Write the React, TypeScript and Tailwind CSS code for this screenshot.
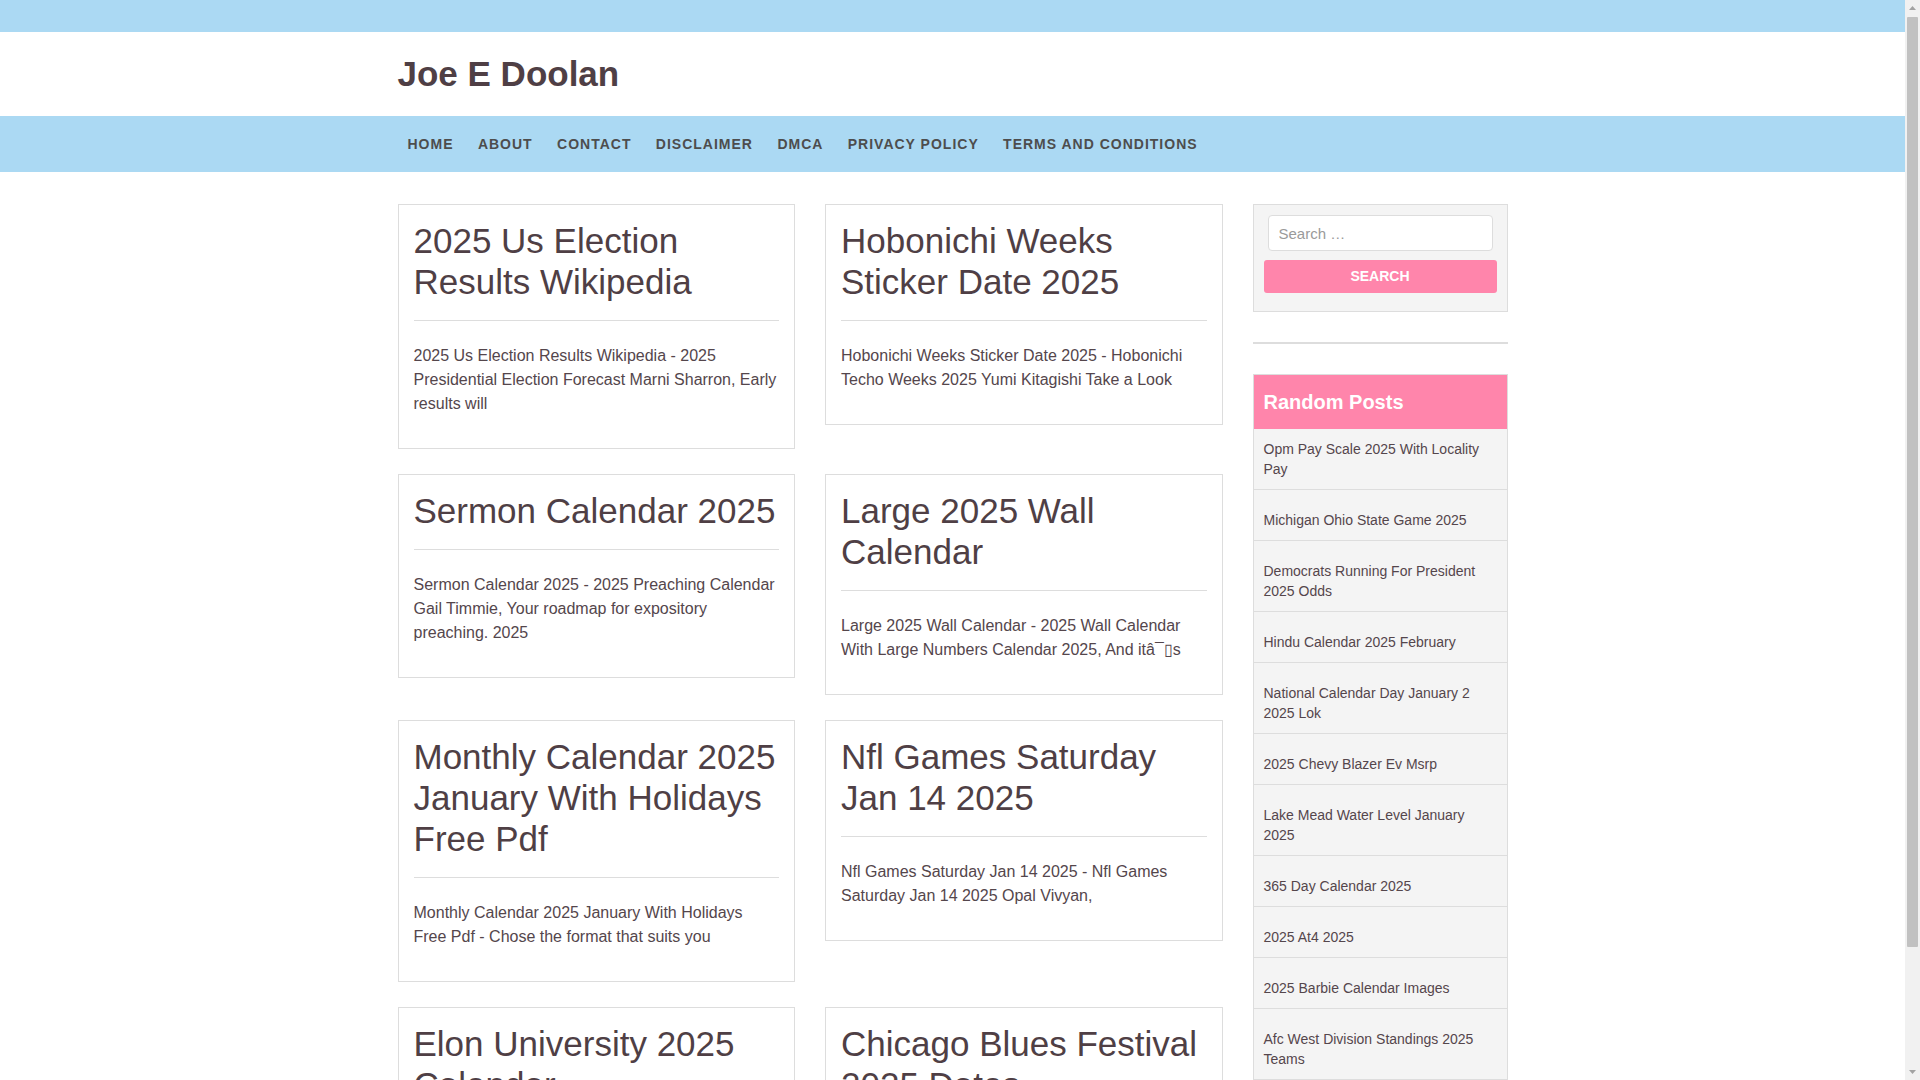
const navLinks = ['Home', 'About', 'Contact', 'Disclaimer', 'DMCA', 'Privacy Policy', 'Terms and Conditions'];

const posts = [
  {
    title: '2025 Us Election Results Wikipedia',
    excerpt: '2025 Us Election Results Wikipedia - 2025 Presidential Election Forecast Marni Sharron, Early results will',
  },
  {
    title: 'Hobonichi Weeks Sticker Date 2025',
    excerpt: 'Hobonichi Weeks Sticker Date 2025 - Hobonichi Techo Weeks 2025 Yumi Kitagishi Take a Look',
  },
  {
    title: 'Sermon Calendar 2025',
    excerpt: 'Sermon Calendar 2025 - 2025 Preaching Calendar Gail Timmie, Your roadmap for expository preaching. 2025',
  },
  {
    title: 'Large 2025 Wall Calendar',
    excerpt: 'Large 2025 Wall Calendar - 2025 Wall Calendar With Large Numbers Calendar 2025, And itâ¯▯s',
  },
  {
    title: 'Monthly Calendar 2025 January With Holidays Free Pdf',
    excerpt: 'Monthly Calendar 2025 January With Holidays Free Pdf - Chose the format that suits you',
  },
  {
    title: 'Nfl Games Saturday Jan 14 2025',
    excerpt: 'Nfl Games Saturday Jan 14 2025 - Nfl Games Saturday Jan 14 2025 Opal Vivyan,',
  },
  {
    title: 'Elon University 2025 Calendar',
    excerpt: 'Elon University 2025 Calendar - Elon University Academic Calendar 2025 Spring and Fall Semester',
  },
  {
    title: 'Chicago Blues Festival 2025 Dates',
    excerpt: 'Chicago Blues Festival 2025 Dates - Chicago Blues Festival 2025 Lineup, Tickets and Schedule',
  },
];

const randomPosts = [
  'Opm Pay Scale 2025 With Locality Pay',
  'Michigan Ohio State Game 2025',
  'Democrats Running For President 2025 Odds',
  'Hindu Calendar 2025 February',
  'National Calendar Day January 2 2025 Lok',
  '2025 Chevy Blazer Ev Msrp',
  'Lake Mead Water Level January 2025',
  '365 Day Calendar 2025',
  '2025 At4 2025',
  '2025 Barbie Calendar Images',
  'Afc West Division Standings 2025 Teams',
];

function PostCard({ title, excerpt }: { title: string; excerpt: string }) {
  return (
    <article className="border border-[#dddddd] bg-white px-[15px] pt-[15px] pb-[16px]">
      <h2 className="mb-[18px] text-[35px] leading-[41px] font-normal text-[#4f3f45]">
        <a href="#">{title}</a>
      </h2>
      <div className="border-t border-[#dddddd]" />
      <p className="mt-[23px] mb-[16px] text-[16px] leading-[24px] text-[#54464c]">{excerpt}</p>
    </article>
  );
}

// window scrollbar as it shows in the screenshot
function Scrollbar() {
  return (
    <div className="flex h-full w-[15px] shrink-0 flex-col items-center bg-[#f1f1f1]">
      <svg width="15" height="17" viewBox="0 0 15 17" className="shrink-0">
        <path d="M4 10 L7.5 6 L11 10 Z" fill="#a3a3a3" />
      </svg>
      <div className="mx-[2px] h-[930px] w-[11px] rounded-[1px] bg-[#c1c1c1]" />
      <div className="flex-1" />
      <svg width="15" height="17" viewBox="0 0 15 17" className="shrink-0">
        <path d="M4 7 L7.5 11 L11 7 Z" fill="#a3a3a3" />
      </svg>
    </div>
  );
}

export default function App() {
  return (
    <div className="flex h-screen w-full overflow-hidden bg-white font-['Liberation_Sans',Arial,sans-serif] text-[#4f3f45]">
      <div className="h-full min-w-0 flex-1 overflow-y-auto [scrollbar-width:none]">
        <div className="h-[32px] bg-[#abd9f3]" />

        <header className="h-[84px] bg-white">
          <div className="mx-auto w-[1140px] px-[15px] pt-[21px]">
            <a href="#" className="text-[35px] leading-[42px] font-bold text-[#4f3f45]">
              Joe E Doolan
            </a>
          </div>
        </header>

        <nav className="h-[56px] bg-[#abd9f3]">
          <ul className="mx-auto flex h-full w-[1140px] items-center gap-[24.4px] pl-[25px]">
            {navLinks.map((link) => (
              <li key={link}>
                <a href="#" className="text-[14px] leading-[20px] font-bold tracking-[1px] text-[#4d4d4d] uppercase">
                  {link}
                </a>
              </li>
            ))}
          </ul>
        </nav>

        <div className="mx-auto flex w-[1140px] pt-[32px] pb-[40px]">
          <main className="w-[855px] px-[15px]">
            <div className="grid grid-cols-2 items-start gap-x-[30px] gap-y-[25px]">
              {posts.map((post) => (
                <PostCard key={post.title} title={post.title} excerpt={post.excerpt} />
              ))}
            </div>
          </main>

          <aside className="w-[285px] px-[15px]">
            <div className="border border-[#dddddd] bg-[#f4f4f4] px-[10px] pt-[10px] pb-[18px]">
              <input
                type="search"
                placeholder="Search …"
                className="mx-[4px] block h-[36px] w-[225px] rounded-[4px] border border-[#dddddd] bg-white px-[10px] text-[15px] text-[#555] outline-none placeholder:text-[#9a9a9a]"
              />
              <button className="mt-[9px] h-[33px] w-full rounded-[3px] bg-[#ff85ab] text-[14px] font-bold text-white uppercase">
                Search
              </button>
            </div>

            <div className="mt-[30px] h-[2px] bg-[#dddddd]" />

            <section className="mt-[30px] border border-[#dddddd]">
              <h3 className="flex h-[54px] items-center bg-[#ff85ab] px-[10px] text-[20px] font-bold text-white">
                Random Posts
              </h3>
              <ul className="bg-[#f4f4f4]">
                {randomPosts.map((item, i) => (
                  <li
                    key={item}
                    className={
                      i === 0
                        ? 'border-b border-[#dddddd] px-[10px] pt-[10px] pb-[10px] text-[14px] leading-[20px]'
                        : 'border-b border-[#dddddd] px-[10px] pt-[20px] pb-[10px] text-[14px] leading-[20px]'
                    }
                  >
                    <a href="#" className="text-[#54464c]">
                      {item}
                    </a>
                  </li>
                ))}
              </ul>
            </section>
          </aside>
        </div>
      </div>
      <Scrollbar />
    </div>
  );
}
